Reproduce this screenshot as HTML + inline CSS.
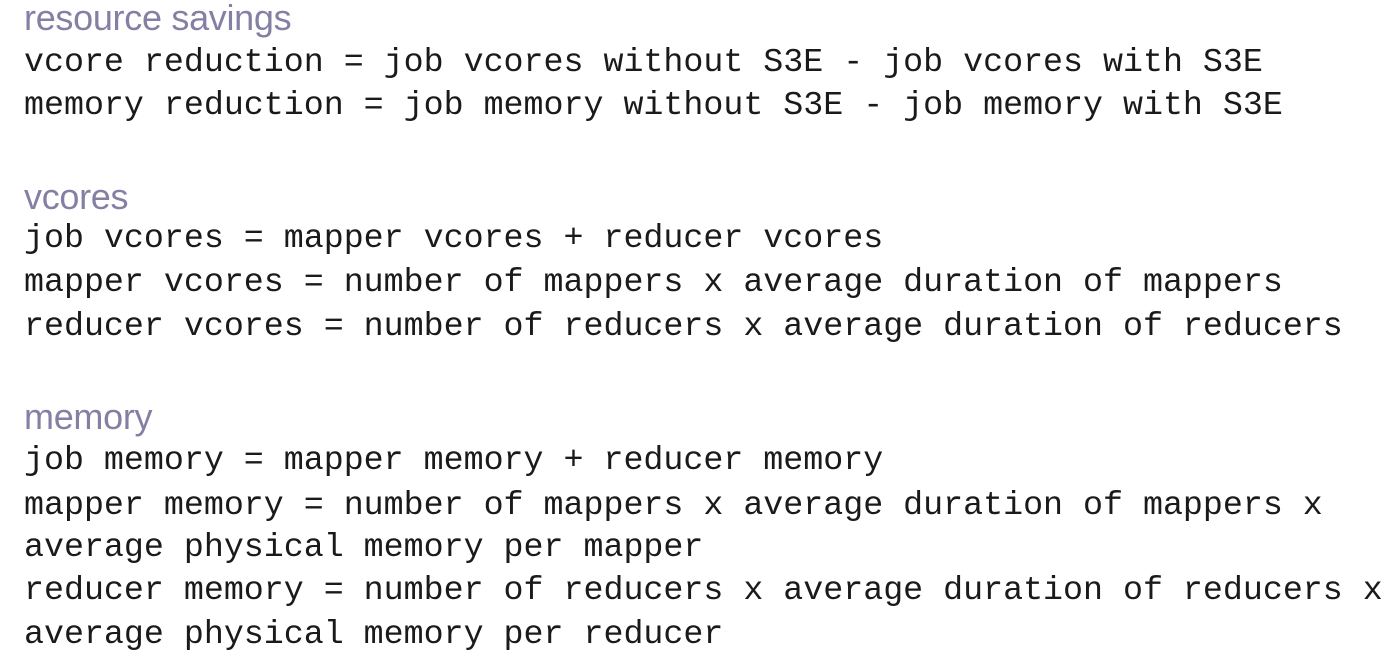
<!DOCTYPE html>
<html><head><meta charset="utf-8"><style>
body{margin:0;width:1400px;height:658px;background:#fff;position:relative;overflow:hidden}
.l{position:absolute;left:24px;white-space:pre;line-height:44px;height:44px}
.m{font-family:"Liberation Mono",monospace;font-size:33.3px;color:#1a1a1a}
.h{font-family:"Liberation Sans",sans-serif;font-size:36px;color:#8480a4;letter-spacing:-0.3px}
</style></head><body>
<div class="l h" style="top:-4px">resource savings</div>
<div class="l m" style="top:40px">vcore reduction = job vcores without S3E - job vcores with S3E</div>
<div class="l m" style="top:83px">memory reduction = job memory without S3E - job memory with S3E</div>
<div class="l h" style="top:175px">vcores</div>
<div class="l m" style="top:216px">job vcores = mapper vcores + reducer vcores</div>
<div class="l m" style="top:260px">mapper vcores = number of mappers x average duration of mappers</div>
<div class="l m" style="top:304px">reducer vcores = number of reducers x average duration of reducers</div>
<div class="l h" style="top:395px">memory</div>
<div class="l m" style="top:438px">job memory = mapper memory + reducer memory</div>
<div class="l m" style="top:483px">mapper memory = number of mappers x average duration of mappers x</div>
<div class="l m" style="top:525px">average physical memory per mapper</div>
<div class="l m" style="top:568px">reducer memory = number of reducers x average duration of reducers x</div>
<div class="l m" style="top:612px">average physical memory per reducer</div>
</body></html>
